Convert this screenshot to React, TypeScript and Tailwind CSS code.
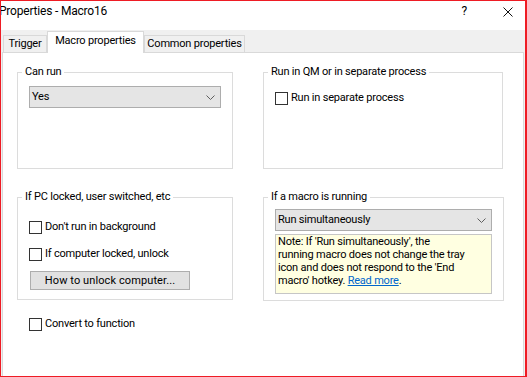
import React from 'react';

const Chevron = () => (
  <svg width="9" height="5" viewBox="0 0 9 5" className="shrink-0">
    <path d="M0.5 0.5 L4.5 4.5 L8.5 0.5" fill="none" stroke="#5f5f5f" strokeWidth="1" />
  </svg>
);

const Combo: React.FC<{ value: string; className?: string }> = ({ value, className }) => (
  <div className={`flex items-center h-[22px] border border-[#adadad] bg-[#e5e5e5] pl-[2px] pr-[5px] ${className ?? ''}`}>
    <span className="flex-1 leading-[14px]">{value}</span>
    <Chevron />
  </div>
);

const Check: React.FC<{ label: string; className?: string }> = ({ label, className }) => (
  <label className={`flex items-center gap-[3px] leading-[14px] ${className ?? ''}`}>
    <span className="w-[13px] h-[13px] border border-[#333333] bg-white shrink-0" />
    <span>{label}</span>
  </label>
);

const Group: React.FC<{ title: string; className?: string; children?: React.ReactNode }> = ({ title, className, children }) => (
  <fieldset className={`border border-[#dcdcdc] px-[11px] ${className ?? ''}`}>
    <legend className="ml-[-7px] px-[3px] leading-[14px]">{title}</legend>
    {children}
  </fieldset>
);

const App: React.FC = () => {
  return (
    <div className="w-[527px] h-[377px] overflow-hidden flex flex-col bg-[#f0f0f0] border-l border-t border-b border-r-2 border-[#ee1c24] font-[Roboto,sans-serif] text-[11px] tracking-[-0.2px] text-black">
      {/* title bar */}
      <div className="h-[29px] bg-white flex items-start pt-[3px] pr-[12px] shrink-0">
        <span className="ml-[-2px] text-[12px] leading-[14px]">Properties - Macro16</span>
        <span className="ml-auto text-[12px] leading-[14px]">?</span>
        <svg width="10" height="10" viewBox="0 0 10 10" className="ml-[36px] mt-[3px]">
          <path d="M0.5 0.5 L9.5 9.5 M9.5 0.5 L0.5 9.5" stroke="#111" strokeWidth="1" />
        </svg>
      </div>

      {/* tabs */}
      <div className="h-[22px] flex items-end pl-[2px] shrink-0">
        <div className="w-[44px] h-[17px] border border-b-0 border-[#d9d9d9] flex items-center justify-center leading-[14px]">
          Trigger
        </div>
        <div className="relative z-10 w-[97px] h-[22px] mb-[-1px] bg-white border border-b-0 border-[#d9d9d9] flex justify-center pt-[2px] leading-[14px]">
          Macro properties
        </div>
        <div className="w-[101px] h-[17px] border border-b-0 border-[#d9d9d9] flex items-center justify-center leading-[14px]">
          Common properties
        </div>
      </div>

      {/* panel */}
      <div className="flex-1 mx-[1px] bg-white border border-b-0 border-[#d9d9d9] pt-[12px] pl-[14px] flex gap-[30px]">
        <div className="w-[216px] flex flex-col">
          <Group title="Can run" className="h-[104px] pt-[7px]">
            <Combo value="Yes" className="w-[192px]" />
          </Group>
          <Group title="If PC locked, user switched, etc" className="h-[110px] mt-[21px] pt-[16px]">
            <Check label="Don't run in background" />
            <Check label="If computer locked, unlock" className="mt-[13px]" />
            <button className="mt-[10px] ml-[1px] w-[160px] h-[19px] border border-[#adadad] bg-[#e1e1e1] leading-[14px] tracking-[0.1px]">
              How to unlock computer...
            </button>
          </Group>
          <Check label="Convert to function" className="mt-[17px] ml-[12px]" />
        </div>

        <div className="w-[240px] flex flex-col">
          <Group title="Run in QM or in separate process" className="h-[104px] pt-[12px]">
            <Check label="Run in separate process" />
          </Group>
          <Group title="If a macro is running" className="h-[111px] mt-[21px] pt-[5px]">
            <Combo value="Run simultaneously" className="w-[217px]" />
            <div className="mt-[3px] w-[217px] h-[60px] border border-[#c6c6c6] bg-[#ffffe1] pl-[2px] leading-[13px]">
              Note: If 'Run simultaneously', the
              <br />
              running macro does not change the tray
              <br />
              icon and does not respond to the 'End
              <br />
              macro' hotkey. <span className="text-[#0066cc] underline">Read more</span>.
            </div>
          </Group>
        </div>
      </div>
    </div>
  );
};

export default App;
